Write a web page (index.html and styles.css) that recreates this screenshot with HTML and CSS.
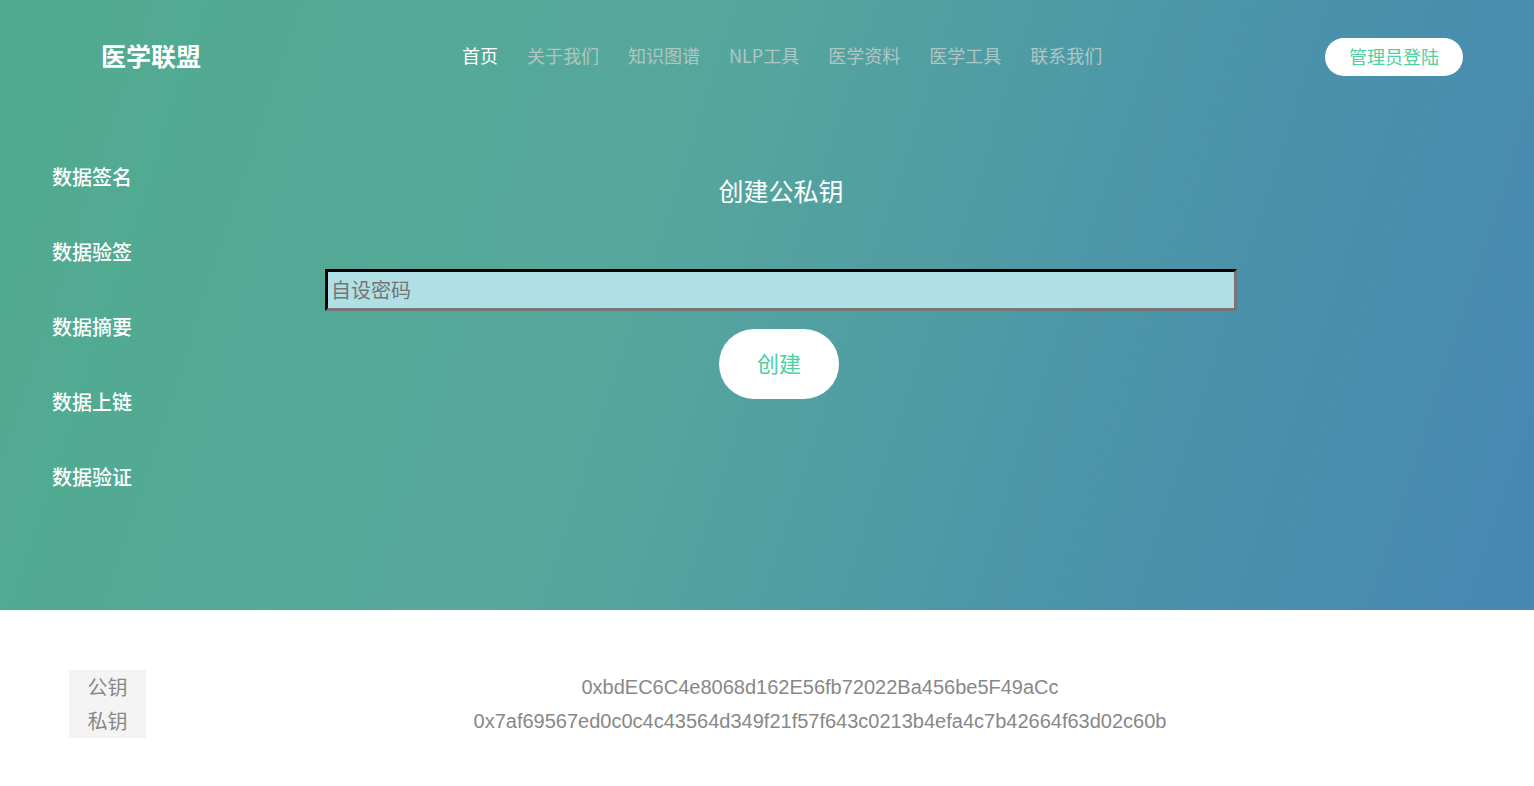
FILE: index.html
```html
<!DOCTYPE html>
<html lang="zh">
<head>
<meta charset="utf-8">
<title>医学联盟</title>
<link rel="stylesheet" href="styles.css">
</head>
<body>
<section class="hero">
  <header class="header">
    <div class="logo">医学联盟</div>
    <nav class="nav">
      <a class="nav-item active">首页</a>
      <a class="nav-item">关于我们</a>
      <a class="nav-item">知识图谱</a>
      <a class="nav-item">NLP工具</a>
      <a class="nav-item">医学资料</a>
      <a class="nav-item">医学工具</a>
      <a class="nav-item">联系我们</a>
    </nav>
    <button class="login">管理员登陆</button>
  </header>
  <div class="main">
    <aside class="sidebar">
      <a class="side-item">数据签名</a>
      <a class="side-item">数据验签</a>
      <a class="side-item">数据摘要</a>
      <a class="side-item">数据上链</a>
      <a class="side-item">数据验证</a>
    </aside>
    <div class="content">
      <h2 class="title">创建公私钥</h2>
      <input class="pwd" type="text" placeholder="自设密码">
      <button class="create">创建</button>
    </div>
  </div>
</section>
<section class="result">
  <div class="labels">
    <div class="label">公钥</div>
    <div class="label">私钥</div>
  </div>
  <div class="values">
    <div class="value">0xbdEC6C4e8068d162E56fb72022Ba456be5F49aCc</div>
    <div class="value">0x7af69567ed0c0c4c43564d349f21f57f643c0213b4efa4c7b42664f63d02c60b</div>
  </div>
</section>
</body>
</html>
```

FILE: styles.css
```css
* { box-sizing: border-box; }
html, body { margin: 0; padding: 0; }
body {
  font-family: "Noto Sans CJK SC", "Noto Sans", sans-serif;
  background: #fff;
  width: 1534px;
}
.hero {
  height: 610px;
  background: linear-gradient(108deg, #50ab8e 0%, #56a89c 40%, #4a93aa 75%, #4787b3 100%);
}
.header {
  height: 112px;
  display: flex;
  align-items: center;
  padding: 0 71px 2px 101px;
}
.logo {
  color: #fff;
  font-size: 25px;
  font-weight: bold;
  width: 361px;
  line-height: 30px;
}
.nav {
  display: flex;
  gap: 29px;
  flex: 1;
}
.nav-item {
  font-size: 18px;
  color: #b0c6c3;
  line-height: 24px;
}
.nav-item.active { color: #fff; }
.login {
  width: 138px;
  height: 38px;
  border: none;
  border-radius: 19px;
  background: #fff;
  color: #4dd0a2;
  font-family: inherit;
  font-size: 18px;
  padding: 0 0 2px;
  margin-top: 4px;
}
.main {
  display: flex;
  padding-top: 50px;
}
.sidebar {
  width: 310px;
  padding-left: 52px;
  display: flex;
  flex-direction: column;
  gap: 45px;
}
.side-item {
  color: #fff;
  font-size: 20px;
  line-height: 30px;
  height: 30px;
  font-weight: 500;
}
.content {
  width: 942px;
  display: flex;
  flex-direction: column;
  align-items: center;
}
.title {
  margin: 0;
  color: #fff;
  font-size: 25px;
  font-weight: normal;
  line-height: 56px;
}
.pwd {
  margin-top: 51px;
  width: 912px;
  height: 42px;
  border: 3px inset #767676;
  border-top-color: #222;
  border-left-color: #222;
  background: #b0e0e6;
  font-family: inherit;
  font-size: 20px;
  padding: 0 3px 2px;
  color: #333;
  outline: none;
}
.pwd::placeholder { color: #757575; }
.create {
  margin-top: 18px;
  margin-right: 4px;
  width: 120px;
  height: 70px;
  border: none;
  border-radius: 35px;
  background: #fff;
  color: #4dd0a2;
  font-family: inherit;
  font-size: 22px;
  padding: 0 0 5px;
}
.result {
  display: flex;
  padding: 60px 40px 0 69px;
}
.labels {
  width: 77px;
  background: #f4f4f4;
}
.label {
  text-align: center;
  font-size: 20px;
  line-height: 34px;
  color: #888;
}
.values {
  flex: 1;
}
.value {
  text-align: center;
  font-family: "Liberation Sans", Arial, sans-serif;
  font-size: 20px;
  line-height: 34px;
  color: #888;
}
```
